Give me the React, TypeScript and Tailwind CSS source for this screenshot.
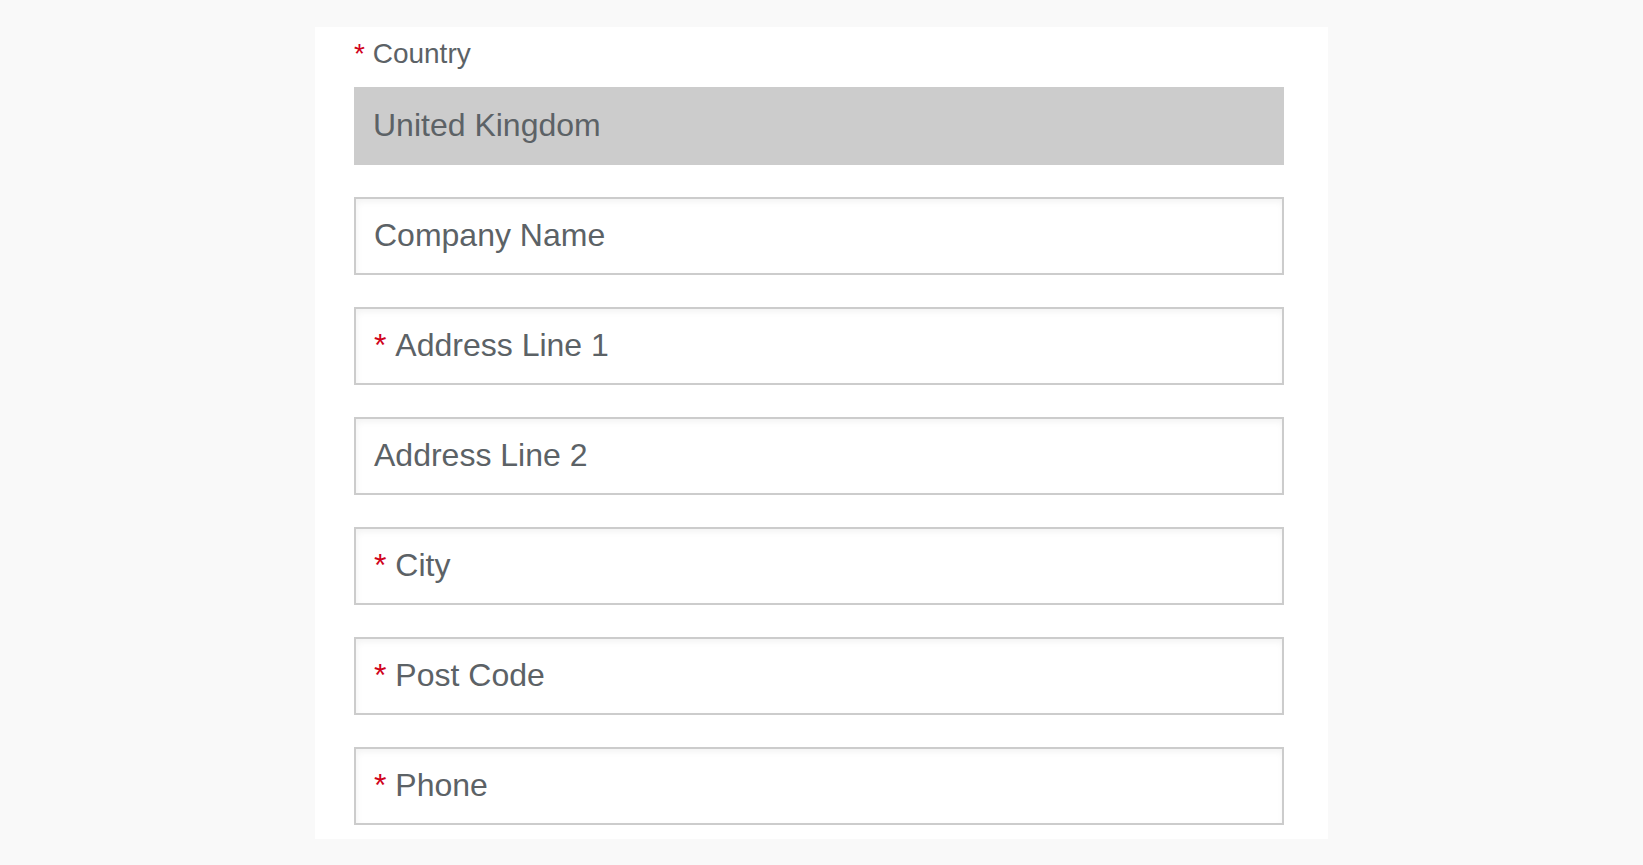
const FIELDS: { label: string; required?: boolean }[] = [
  { label: "Company Name" },
  { label: "Address Line 1", required: true },
  { label: "Address Line 2" },
  { label: "City", required: true },
  { label: "Post Code", required: true },
  { label: "Phone", required: true },
];

export default function App() {
  return (
    <div
      className="min-h-screen bg-[#f9f9f9] py-[27px]"
      style={{ fontFamily: '"Liberation Sans", Arial, sans-serif' }}
    >
      <form className="mx-auto w-[1013px] bg-white pb-[14px] pl-[39px] pr-[44px] pt-[11px] text-[#5c6266]">
        <label className="mb-[17px] block text-[28px] leading-[32px]">
          <span className="text-[#d0021b]">*</span> Country
        </label>
        <div className="flex h-[78px] items-center border-2 border-[#cccccc] bg-[#cccccc] pb-[3px] pl-[17px] text-[32px]">
          United Kingdom
        </div>

        {FIELDS.map((f) => (
          <div
            key={f.label}
            className="mt-[32px] flex h-[78px] items-center border-2 border-[#cccccc] bg-white pb-[3px] pl-[18px] text-[32px] shadow-[inset_1px_3px_6px_rgba(0,0,0,0.05)]"
          >
            {f.required && <span className="text-[#d0021b]">*&nbsp;</span>}
            {f.label}
          </div>
        ))}
      </form>
    </div>
  );
}
